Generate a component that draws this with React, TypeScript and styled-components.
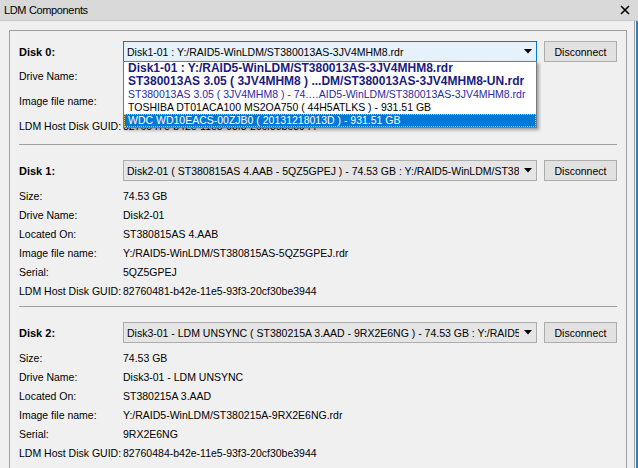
import React from 'react';
import styled, { createGlobalStyle } from 'styled-components';

const GlobalStyle = createGlobalStyle`
  html, body {
    margin: 0;
    padding: 0;
    background: #f0f0f0;
  }
  body {
    font-family: "Liberation Sans", Arial, sans-serif;
    font-size: 10.5px;
    color: #000;
  }
`;

const Frame = styled.div`
  display: flex;
  flex-direction: column;
  width: 638px;
  height: 468px;
  overflow: hidden;
`;

const TitleBar = styled.div`
  display: flex;
  align-items: center;
  justify-content: space-between;
  height: 20px;
  padding: 0 8px 0 4px;
  background: #d9d9d9;
  border-bottom: 1px solid #c8c8c8;
  font-size: 11px;
  letter-spacing: -0.35px;
`;

const Client = styled.div`
  display: flex;
  flex: 1;
  min-height: 0;
  padding-right: 1px;
  border-right: 2px solid #3a7db3;
`;

const Body = styled.div`
  flex: 1;
  padding: 9px 7px 0 9px;
  border-right: 1px solid #a0a0a0;
  overflow: hidden;
`;

const Panel = styled.div`
  border: 1px solid #a0a0a0;
  border-bottom: none;
  padding: 10px 9px 0 9px;
  height: 460px;
`;

const Section = styled.div<{ first?: boolean }>`
  padding: ${p => (p.first ? '0' : '15px')} 0 6px;
  border-top: ${p => (p.first ? 'none' : '1px solid #a0a0a0')};
`;

const Header = styled.div`
  display: flex;
  align-items: center;
  height: 21px;
`;

const DiskLabel = styled.div`
  width: 104px;
  flex-shrink: 0;
  font-weight: bold;
  font-size: 11px;
  padding-top: 1px;
`;

const SelectWrap = styled.div`
  position: relative;
  flex: 1;
  min-width: 0;
  height: 21px;
`;

const SelectBox = styled.div<{ open?: boolean }>`
  display: flex;
  align-items: center;
  height: 100%;
  box-sizing: border-box;
  border: 1px solid ${p => (p.open ? '#0078d7' : '#adadad')};
  background: ${p => (p.open ? '#e5f1fb' : '#e5e5e5')};
  padding-left: 3px;
`;

const SelectText = styled.span`
  flex: 1;
  white-space: nowrap;
  overflow: hidden;
`;

const Arrow = styled.span`
  width: 17px;
  display: flex;
  justify-content: center;
  flex-shrink: 0;
`;

const Button = styled.div`
  width: 73px;
  flex-shrink: 0;
  margin-left: 7px;
  height: 21px;
  box-sizing: border-box;
  border: 1px solid #adadad;
  background: #e1e1e1;
  display: flex;
  align-items: center;
  justify-content: center;
`;

const DropList = styled.div`
  position: absolute;
  left: 0;
  right: 0;
  top: 20px;
  border: 1px solid #7a7a7a;
  background: #fff;
  box-shadow: 2px 2px 3px rgba(0, 0, 0, 0.35);
  z-index: 5;
`;

type Tone = 'bold' | 'blue' | 'plain' | 'selected';

const DropItem = styled.div<{ tone: Tone }>`
  height: 13px;
  line-height: 13px;
  padding-left: 4px;
  white-space: nowrap;
  overflow: hidden;
  box-sizing: border-box;
  font-weight: ${p => (p.tone === 'bold' ? 'bold' : 'normal')};
  font-size: ${p => (p.tone === 'bold' ? '12px' : '10.5px')};
  color: ${p =>
    p.tone === 'bold' ? '#1b1b80' : p.tone === 'blue' ? '#2a2aa8' : p.tone === 'selected' ? '#fff' : '#000'};
  background: ${p => (p.tone === 'selected' ? '#0078d7' : 'transparent')};
  outline: ${p => (p.tone === 'selected' ? '1px dotted #f0c070' : 'none')};
  outline-offset: -1px;
`;

const Rows = styled.div<{ top: number }>`
  margin-top: ${p => p.top}px;
`;

const Row = styled.div<{ h: number }>`
  display: grid;
  grid-template-columns: 104px 1fr;
  align-items: center;
  height: ${p => p.h}px;
  white-space: nowrap;
`;

const ArrowIcon = () => (
  <svg width="8" height="5" viewBox="0 0 8 5">
    <path d="M0 0h8L4 4.5z" fill="#000" />
  </svg>
);

const CloseIcon = () => (
  <svg width="10" height="10" viewBox="0 0 10 10">
    <path d="M1 1L9 9M9 1L1 9" stroke="#000" strokeWidth="1.6" />
  </svg>
);

interface Disk {
  name: string;
  selected: string;
  rowHeight: number;
  rowsTop: number;
  rows: [string, string][];
  open?: boolean;
}

const disks: Disk[] = [
  {
    name: 'Disk 0:',
    selected: 'Disk1-01 : Y:/RAID5-WinLDM/ST380013AS-3JV4MHM8.rdr',
    rowHeight: 25,
    rowsTop: 1,
    open: true,
    rows: [
      ['Drive Name:', 'Disk1-01'],
      ['Image file name:', 'Y:/RAID5-WinLDM/ST380013AS-3JV4MHM8.rdr'],
      ['LDM Host Disk GUID:', '8276047e-b42e-11e5-93f3-20cf30be3944'],
    ],
  },
  {
    name: 'Disk 1:',
    selected: 'Disk2-01 ( ST380815AS 4.AAB - 5QZ5GPEJ )  - 74.53 GB : Y:/RAID5-WinLDM/ST380815AS-5QZ5GPEJ.rdr',
    rowHeight: 19,
    rowsTop: 5,
    rows: [
      ['Size:', '74.53 GB'],
      ['Drive Name:', 'Disk2-01'],
      ['Located On:', 'ST380815AS 4.AAB'],
      ['Image file name:', 'Y:/RAID5-WinLDM/ST380815AS-5QZ5GPEJ.rdr'],
      ['Serial:', '5QZ5GPEJ'],
      ['LDM Host Disk GUID:', '82760481-b42e-11e5-93f3-20cf30be3944'],
    ],
  },
  {
    name: 'Disk 2:',
    selected: 'Disk3-01 - LDM UNSYNC ( ST380215A 3.AAD - 9RX2E6NG )  - 74.53 GB : Y:/RAID5-WinLDM/ST380215A-9RX2E6NG.rdr',
    rowHeight: 19,
    rowsTop: 5,
    rows: [
      ['Size:', '74.53 GB'],
      ['Drive Name:', 'Disk3-01 - LDM UNSYNC'],
      ['Located On:', 'ST380215A 3.AAD'],
      ['Image file name:', 'Y:/RAID5-WinLDM/ST380215A-9RX2E6NG.rdr'],
      ['Serial:', '9RX2E6NG'],
      ['LDM Host Disk GUID:', '82760484-b42e-11e5-93f3-20cf30be3944'],
    ],
  },
];

const options: { text: string; tone: Tone }[] = [
  { text: 'Disk1-01 : Y:/RAID5-WinLDM/ST380013AS-3JV4MHM8.rdr', tone: 'bold' },
  { text: 'ST380013AS 3.05 ( 3JV4MHM8 ) ...DM/ST380013AS-3JV4MHM8-UN.rdr', tone: 'bold' },
  { text: 'ST380013AS 3.05 ( 3JV4MHM8 )  - 74.…AID5-WinLDM/ST380013AS-3JV4MHM8.rdr', tone: 'blue' },
  { text: 'TOSHIBA DT01ACA100 MS2OA750 ( 44H5ATLKS )  - 931.51 GB', tone: 'plain' },
  { text: 'WDC WD10EACS-00ZJB0 ( 20131218013D )  - 931.51 GB', tone: 'selected' },
];

const App: React.FC = () => {
  return (
    <Frame>
      <GlobalStyle />
      <TitleBar>
        <span>LDM Components</span>
        <CloseIcon />
      </TitleBar>
      <Client>
        <Body>
          <Panel>
            {disks.map((disk, i) => (
              <Section key={disk.name} first={i === 0}>
                <Header>
                  <DiskLabel>{disk.name}</DiskLabel>
                  <SelectWrap>
                    <SelectBox open={disk.open}>
                      <SelectText>{disk.selected}</SelectText>
                      <Arrow>
                        <ArrowIcon />
                      </Arrow>
                    </SelectBox>
                    {disk.open && (
                      <DropList>
                        {options.map(o => (
                          <DropItem key={o.text} tone={o.tone}>
                            {o.text}
                          </DropItem>
                        ))}
                      </DropList>
                    )}
                  </SelectWrap>
                  <Button>Disconnect</Button>
                </Header>
                <Rows top={disk.rowsTop}>
                  {disk.rows.map(([label, value]) => (
                    <Row key={label} h={disk.rowHeight}>
                      <span>{label}</span>
                      <span>{value}</span>
                    </Row>
                  ))}
                </Rows>
              </Section>
            ))}
          </Panel>
        </Body>
      </Client>
    </Frame>
  );
};

export default App;
